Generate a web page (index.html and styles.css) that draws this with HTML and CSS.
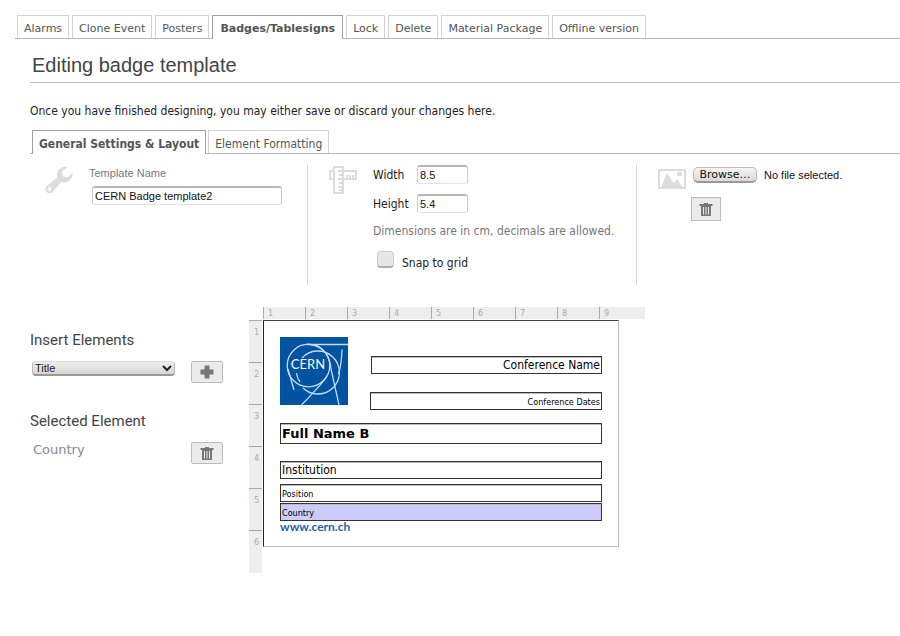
FILE: index.html
```html
<!DOCTYPE html>
<html lang="en">
<head>
<meta charset="utf-8">
<title>Editing badge template</title>
<link rel="stylesheet" href="styles.css">
</head>
<body>
<nav class="tabs tabs-main">
  <a class="tab" href="#">Alarms</a>
  <a class="tab" href="#">Clone Event</a>
  <a class="tab" href="#">Posters</a>
  <a class="tab active" href="#">Badges/Tablesigns</a>
  <a class="tab" href="#">Lock</a>
  <a class="tab" href="#">Delete</a>
  <a class="tab" href="#">Material Package</a>
  <a class="tab" href="#">Offline version</a>
</nav>
<main class="page">
  <h1 class="title">Editing badge template</h1>
  <p class="intro">Once you have finished designing, you may either save or discard your changes here.</p>
  <nav class="tabs">
    <a class="tab active" href="#">General Settings &amp; Layout</a>
    <a class="tab" href="#">Element Formatting</a>
  </nav>

  <section class="settings">
    <div class="setting setting-name">
      <svg class="icon" width="28" height="28" viewBox="0 0 28 28"><path fill="#dcdcdc" fill-rule="evenodd" d="M22.500 1.200A8 8 0 0 0 12 9.500L12.100 11.600L1.600 20.200A4.200 4.200 0 1 0 7.700 26L16.300 15.800A8 8 0 0 0 27.400 7.100L22.400 11.200L17.900 10.200L17.100 5.400ZM4.500 21A2 2 0 1 1 4.500 25A2 2 0 0 1 4.500 21Z"/></svg>
      <div class="name-field">
        <label class="name-label" for="tpl">Template Name</label>
        <input class="text name-input" id="tpl" type="text" value="CERN Badge template2">
      </div>
    </div>
    <div class="setting setting-size">
      <svg class="icon" width="28" height="28" viewBox="0 0 28 28" fill="none" stroke="#dcdcdc" stroke-width="2"><path d="M4 5H1V13H4M14 5H27V13H14M5 1H14V27H5ZM14 5H9M14 9H10M14 13H9M14 17H10M14 21H9M14 24H10M18 13V9M21 13V9M24 13V9"/></svg>
      <div class="size-fields">
        <div class="field"><label for="w">Width</label><input class="text" id="w" type="text" value="8.5"></div>
        <div class="field"><label for="h">Height</label><input class="text" id="h" type="text" value="5.4"></div>
        <p class="hint">Dimensions are in cm, decimals are allowed.</p>
        <div class="snap"><input id="snap" type="checkbox"><label for="snap">Snap to grid</label></div>
      </div>
    </div>
    <div class="setting setting-file">
      <svg class="icon" width="28" height="28" viewBox="0 0 28 28"><rect x="1" y="4" width="26" height="18" fill="none" stroke="#dcdcdc" stroke-width="2"/><path fill="#dcdcdc" d="M3 22L9 7L15.500 17L19 13L25 22Z"/><circle cx="21.500" cy="8" r="2.500" fill="#dcdcdc"/></svg>
      <div class="file-fields">
        <div class="file"><input class="file-input" id="bg" type="file"><label class="browse" for="bg">Browse…</label><span>No file selected.</span></div>
        <button class="btn btn-file" type="button" aria-label="Remove background"><svg width="14" height="14" viewBox="0 0 14 14"><path fill="#777" d="M.5 2H5V1H9V2H13.500V4H.5ZM2 4H12V14H2Z"/><path stroke="#ebebeb" d="M4.500 5V12.500M7 5V12.500M9.500 5V12.500"/></svg></button>
      </div>
    </div>
  </section>

  <section class="editor">
    <aside class="side">
      <h2><label for="el">Insert Elements</label></h2>
      <div class="side-row">
        <div class="select-wrap">
          <select id="el"><option>Title</option></select>
          <svg class="chevron" width="10" height="8" viewBox="0 0 10 8"><path d="M1 2L5 6L9 2" fill="none" stroke="#222" stroke-width="2"/></svg>
        </div>
        <button class="btn" type="button" aria-label="Insert element"><svg width="14" height="14" viewBox="0 0 14 14"><path fill="#777" d="M4.500 .5H9.500V4.500H13.500V9.500H9.500V13.500H4.500V9.500H.5V4.500H4.500Z"/></svg></button>
      </div>
      <h2>Selected Element</h2>
      <div class="side-row">
        <span class="selected">Country</span>
        <button class="btn" type="button" aria-label="Remove element"><svg width="14" height="14" viewBox="0 0 14 14"><path fill="#777" d="M.5 2H5V1H9V2H13.500V4H.5ZM2 4H12V14H2Z"/><path stroke="#ebebeb" d="M4.500 5V12.500M7 5V12.500M9.500 5V12.500"/></svg></button>
      </div>
    </aside>
    <div class="workspace">
      <div class="ruler ruler-top"><span>1</span><span>2</span><span>3</span><span>4</span><span>5</span><span>6</span><span>7</span><span>8</span><span>9</span></div>
      <div class="ruler ruler-left"><span>1</span><span>2</span><span>3</span><span>4</span><span>5</span><span>6</span></div>
      <div class="badge">
        <svg class="logo" width="68" height="68" viewBox="0 0 68 68">
          <rect width="68" height="68" fill="#0053a1"/>
          <g fill="none" stroke="#c9dbee" stroke-width="1.300">
            <circle cx="28.500" cy="28.500" r="21.300"/>
            <path d="M22 21A21.500 21.500 0 1 1 23 51"/>
            <path d="M27 7.500H68M28.500 7.500Q37 8 43 13M62 12.500Q61.500 28 58.500 37M46 17Q50 22 51 32L59 68M47 39Q43 46 21.500 68M8 32L14 53M16.500 36Q17 41 20 45"/>
          </g>
          <text class="logo-text" x="28" y="32" text-anchor="middle">CERN</text>
        </svg>
        <div class="item conf-name">Conference Name</div>
        <div class="item conf-dates">Conference Dates</div>
        <div class="item full-name">Full Name B</div>
        <div class="item institution">Institution</div>
        <div class="item position">Position</div>
        <div class="item country">Country</div>
        <a class="site" href="#">www.cern.ch</a>
      </div>
    </div>
  </section>
</main>
</body>
</html>
```
FILE: styles.css
```css
* { box-sizing: border-box; }
body {
  margin: 0;
  padding-top: 15px;
  background: #fff;
  color: #222;
  font: 12px/16px "DejaVu Sans Condensed", "DejaVu Sans", sans-serif;
}
h1, h2, p { margin: 0; font-weight: normal; }
input, select, button { font-family: "Liberation Sans", sans-serif; margin: 0; }

.tabs { display: flex; gap: 2px; padding-left: 2px; border-bottom: 1px solid #b5b5b5; }
.tabs-main { gap: 3px; margin-left: 15px; font-family: "DejaVu Sans", sans-serif; font-size: 11px; }
.tab {
  height: 23px;
  padding: 0 6px;
  border: 1px solid #d2d2d2;
  border-bottom: 0;
  color: #555;
  line-height: 26px;
  text-decoration: none;
  white-space: nowrap;
}
.tab.active {
  height: 24px;
  margin-bottom: -1px;
  border-color: #a0a0a0;
  background: #fff;
  font-weight: bold;
}
.tabs-main .tab.active { padding: 0 7px; }
.page { padding-left: 30px; }
.title {
  padding: 14px 2px 5px;
  border-bottom: 1px solid #bbb;
  color: #444;
  font: 20px/24px "Liberation Sans", sans-serif;
}
.intro { padding: 20px 0 11px; }

.settings { display: grid; grid-template-columns: 278px 329px 1fr; padding-top: 11px; }
.setting { display: flex; min-height: 120px; border-right: 1px solid #d8d8d8; }
.setting:last-child { border: 0; }
.icon { flex: none; margin-top: 1px; }
.setting-name { padding-left: 15px; gap: 16px; }
.setting-size { padding-left: 21px; gap: 16px; }
.setting-file { padding-left: 21px; gap: 5px; }
.name-label { display: block; color: #777; font: 11px/16px "Liberation Sans", sans-serif; }
.name-input { width: 190px; margin: 5px 0 0 3px; }
.text {
  height: 19px;
  padding: 0 2px;
  border: 1px solid #ccc;
  border-top: 2px solid #b5b5b5;
  border-bottom-color: #e4e4e4;
  border-radius: 3px;
  color: #111;
  font-size: 11px;
}
.field { display: flex; align-items: center; height: 19px; margin-bottom: 10px; }
.field label { width: 44px; }
.field .text { width: 51px; }
.hint { color: #777; }
.snap { display: flex; gap: 8px; padding: 12px 0 0 4px; }
.snap input {
  width: 17px;
  height: 17px;
  appearance: none;
  border: 1px solid #ccc;
  border-bottom: 2px solid #aaa;
  border-radius: 4px;
  background: #e8e7e6;
}
.snap label { padding-top: 4px; }
.file { display: flex; position: relative; gap: 7px; padding: 2px 0 0 2px; font: 11px/16px "Liberation Sans", sans-serif; color: #111; }
.file-input { position: absolute; width: 64px; height: 16px; opacity: 0; }
.browse {
  width: 64px;
  height: 16px;
  border: 1px solid #bbb;
  border-bottom: 2px solid #999;
  border-radius: 5px;
  background: linear-gradient(#f6f5f4, #dcdad9);
  font: 11px/14px "DejaVu Sans", sans-serif;
  text-align: center;
}
.btn {
  display: flex;
  flex: none;
  align-items: center;
  justify-content: center;
  width: 32px;
  height: 22px;
  padding: 0;
  border: 1px solid #bbb;
  border-radius: 2px;
  background: #ebebeb;
}
.btn-file { width: 30px; height: 24px; margin-top: 14px; border-radius: 0; }

.editor { display: flex; gap: 26px; padding-top: 22px; }
.side { width: 193px; padding-top: 23px; }
.side h2 { color: #444; font: 15px/20px Roboto, sans-serif; }
.side-row { display: flex; align-items: flex-start; justify-content: space-between; padding: 11px 0 28px; }
.select-wrap { position: relative; margin-left: 2px; }
.select-wrap select {
  display: block;
  width: 143px;
  height: 15px;
  padding: 0 2px;
  appearance: none;
  border: 1px solid #bbb;
  border-top-color: #ddd;
  border-bottom: 2px solid #999;
  border-radius: 4px;
  background: linear-gradient(#f0efee, #d8d6d4);
  color: #222;
  font-size: 11px;
  line-height: 12px;
}
.chevron { position: absolute; top: 3px; right: 3px; pointer-events: none; }
.selected { padding-left: 3px; color: #888; font-family: "DejaVu Sans", sans-serif; font-size: 13px; }

.workspace { display: grid; grid-template-columns: 14px 382px; grid-template-rows: 13px 253px; }
.ruler { display: flex; background: #eee; color: #aaa; font: 8px/13px "DejaVu Sans", sans-serif; }
.ruler-top { grid-column: 2; height: 12px; }
.ruler-top span { width: 42px; padding-left: 4px; border-left: 1px solid #aaa; }
.ruler-top span:last-child { width: 46px; }
.ruler-left { flex-direction: column; width: 13px; }
.ruler-left span { height: 42px; padding: 5px 0 0 5px; border-top: 1px solid #aaa; }
.badge {
  position: relative;
  width: 356px;
  height: 227px;
  border: 1px solid #bbb;
  border-top-color: #444;
  border-left-color: #222;
  color: #000;
}
.logo { position: absolute; left: 16px; top: 16px; }
.logo-text { fill: #fff; font: 13px Lato, sans-serif; }
.item { position: absolute; left: 16px; width: 322px; height: 18px; padding: 0 1px; border: 1px solid #333; line-height: 16px; box-shadow: inset 0 1px #bbb; }
.conf-name { left: 107px; top: 35px; width: 231px; text-align: right; }
.conf-dates { left: 106px; top: 71px; width: 232px; font-size: 9px; line-height: 18px; text-align: right; }
.full-name { top: 102px; height: 21px; font: bold 13px/19px "DejaVu Sans", sans-serif; }
.institution { top: 140px; }
.position { top: 163px; font-size: 9px; line-height: 18px; }
.country { top: 182px; background: #ccf; font-size: 9px; line-height: 18px; }
.site { position: absolute; left: 16px; top: 199px; color: #1f5fa8; font: bold 12px/14px Lato, sans-serif; text-decoration: none; }
```
